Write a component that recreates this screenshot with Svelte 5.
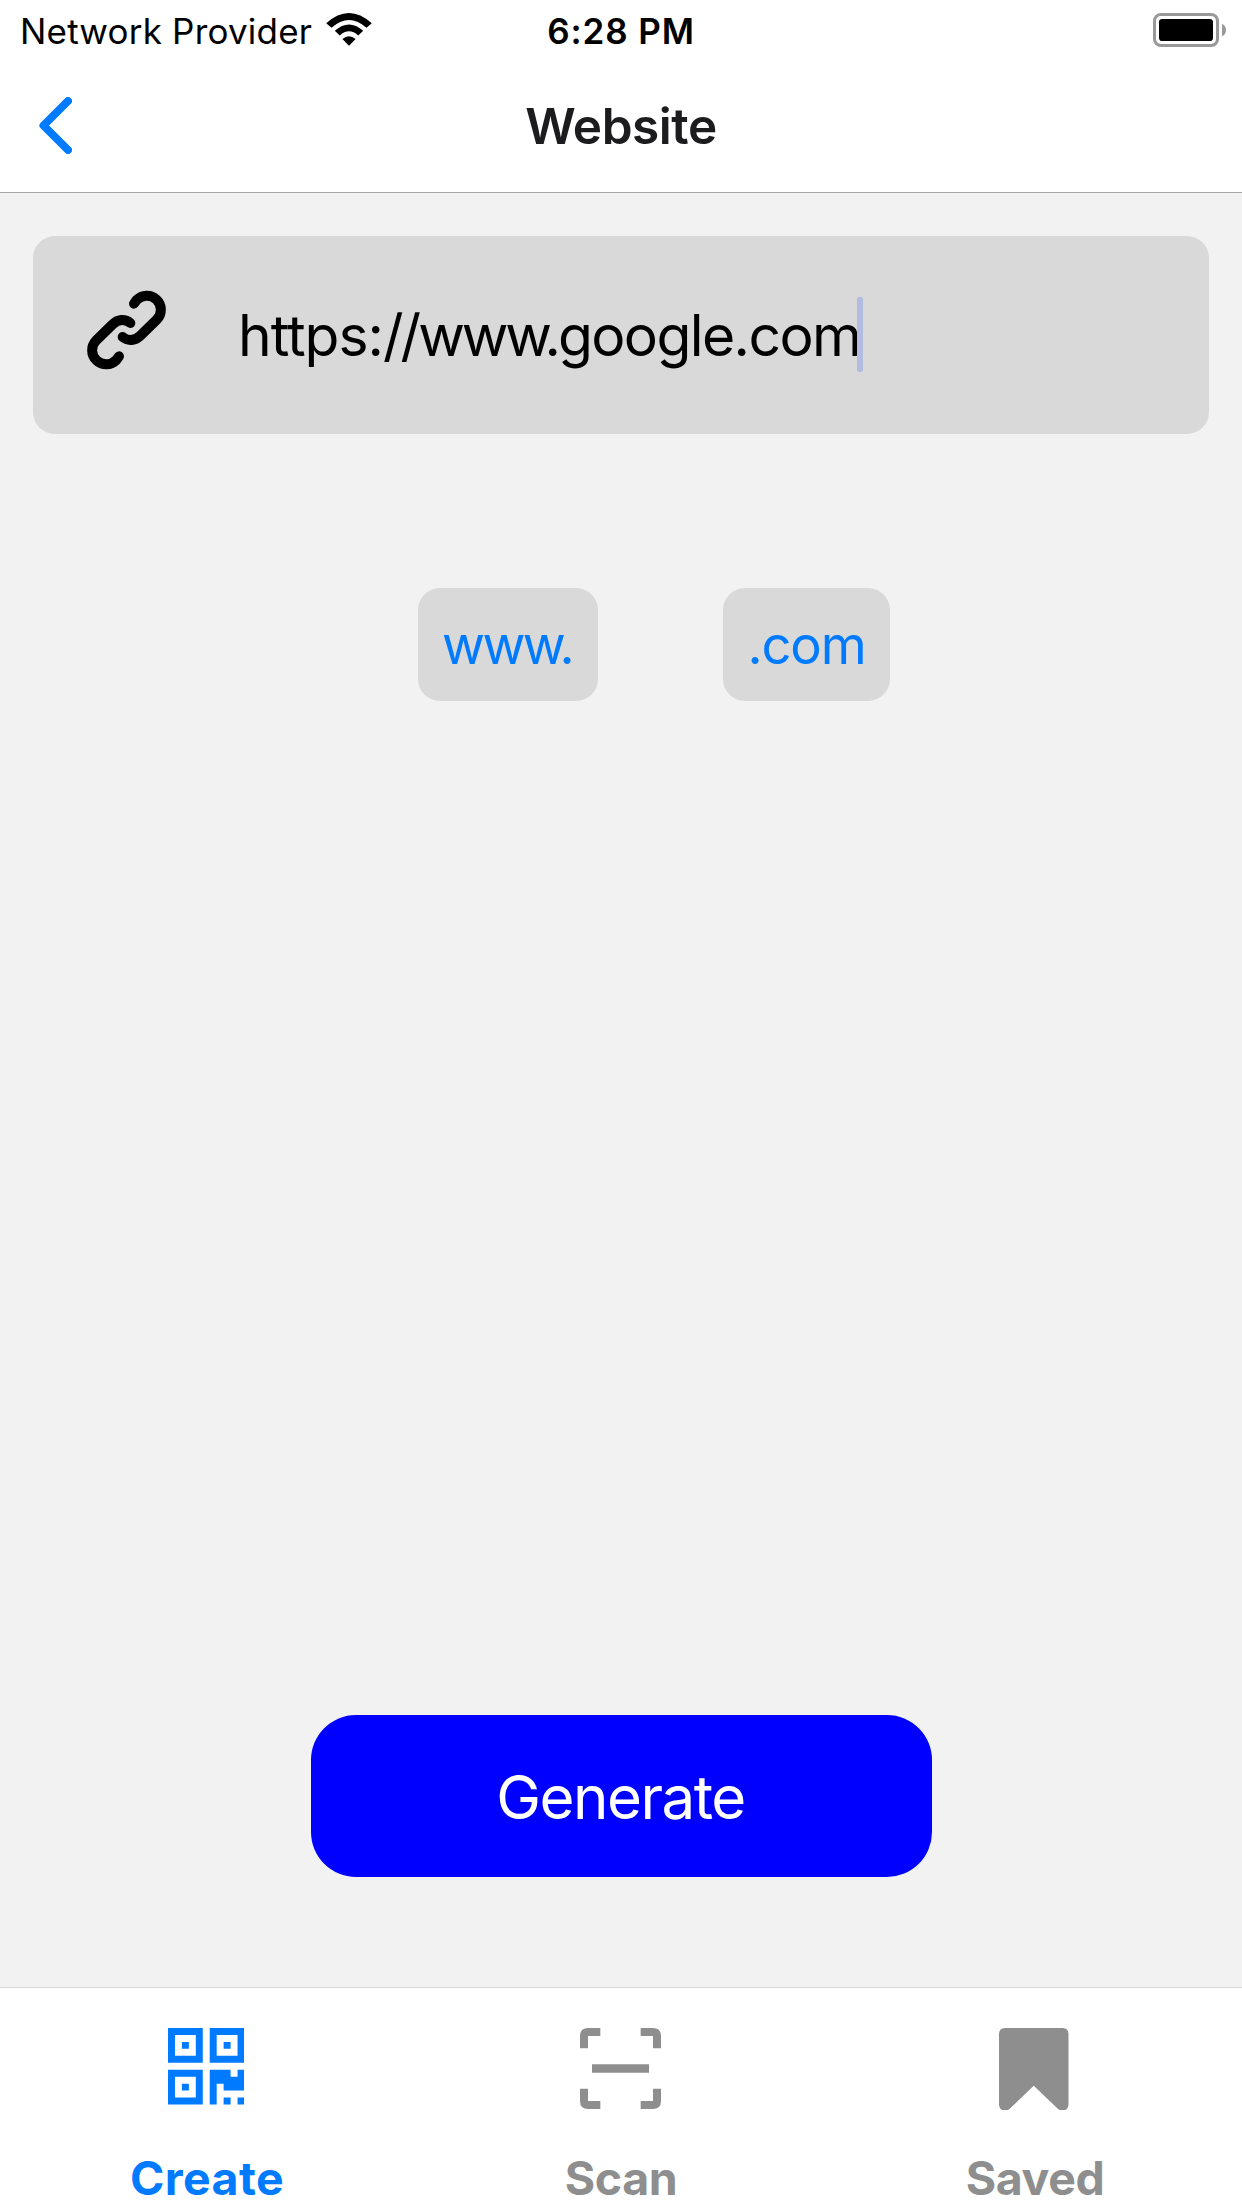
<script>
  // The address is kept in parts so that each one can carry its own tracking.
  const address = [
    { kind: 'scheme', text: 'https:' },
    { kind: 'slashes', text: '//' },
    { kind: 'prefix', text: 'www.' },
    { kind: 'domain', text: 'google.com' }
  ];
  let active = $state('create');
  const tabs = [
    { id: 'create', label: 'Create' },
    { id: 'scan', label: 'Scan' },
    { id: 'saved', label: 'Saved' }
  ];
</script>

<div class="screen">
  <header>
    <div class="status">
      <div class="carrier">
        <span class="network">Network Provider</span>
        <svg class="wifi" viewBox="0 0 138 100" aria-hidden="true">
          <path d="M0 31 Q69 -31 138 31 L122 45 Q69 -2 16 45Z" />
          <path d="M26 54 Q69 15 112 54 L97 68 Q69 43 41 68Z" />
          <path d="M49 79 Q69 62 89 79 L69 99Z" />
        </svg>
      </div>
      <span class="time">6:28 PM</span>
      <div class="power">
        <svg class="battery" viewBox="0 0 222 102" aria-hidden="true">
          <rect x="4.5" y="4.5" width="189" height="93" rx="19" fill="#fff" stroke="#999" stroke-width="9" />
          <rect x="18" y="18" width="162" height="66" rx="10" />
          <path d="M207 32Q219 38 219 51Q219 64 207 70Z" fill="#999" />
        </svg>
      </div>
    </div>
    <nav>
      <button class="back" aria-label="Back">
        <svg viewBox="0 0 33 57"><path d="M29 4L4.5 28.500L29 53" /></svg>
      </button>
      <h1>Website</h1>
    </nav>
  </header>

  <main>
    <div class="field">
      <svg class="link" viewBox="198 207 243 246" aria-hidden="true">
        <path d="M342 251L350 240A42 42 0 0 1 411 298L362 346C346 362 325 365 308 351" />
        <path d="M297 409L289 420A42 42 0 0 1 228 362L277 314C293 298 314 295 331 309" />
      </svg>
      <span class="url">{#each address as part (part.kind)}<span class={part.kind}>{part.text}</span>{/each}</span>
      <span class="caret"></span>
    </div>

    <div class="chips">
      <button class="chip www">www.</button>
      <button class="chip com">.com</button>
    </div>

    <button class="generate"><span>Generate</span></button>
  </main>

  <footer>
    {#each tabs as tab (tab.id)}
      <button class="tab {tab.id}" class:active={active === tab.id} onclick={() => (active = tab.id)}>
        <span class="icon">
          {#if tab.id === 'create'}
            <svg class="qr" viewBox="0 0 11 11">
              <path fill-rule="evenodd" d="M0 0h5v5h-5zM1 1v3h3v-3zM2 2h1v1h-1zM6 0h5v5h-5zM7 1v3h3v-3zM8 2h1v1h-1zM0 6h5v5h-5zM1 7v3h3v-3zM2 8h1v1h-1zM6 6h3v1h1v-1h1v3h-3v-1h-1v3h-1zM8 10h1v1h-1zM10 10h1v1h-1z" />
            </svg>
          {:else if tab.id === 'scan'}
            <svg class="frame" viewBox="0 0 243 243">
              <path d="M0 61V24Q0 0 24 0H61V24H24V61ZM182 0H219Q243 0 243 24V61H219V24H182ZM0 182H24V219H61V243H24Q0 243 0 219ZM219 182H243V219Q243 243 219 243H182V219H219ZM36 109H207V134H36Z" />
            </svg>
          {:else}
            <svg class="bookmark" viewBox="0 0 208 247">
              <path d="M18 0H190Q208 0 208 18V229C208 246 189 253 176 242L104 173L32 242C19 253 0 246 0 229V18Q0 0 18 0Z" />
            </svg>
          {/if}
        </span>
        <span class="label">{tab.label}</span>
      </button>
    {/each}
  </footer>
</div>

<style>
  :global(body) {
    background: #f2f2f2;
  }
  .screen {
    width: 1242px;
    height: 2208px;
    display: flex;
    flex-direction: column;
    font-family: Inter, 'Liberation Sans', sans-serif;
    color: #000;
    white-space: nowrap;
  }
  button {
    border: 0;
    padding: 0;
    margin: 0;
    background: none;
    font: inherit;
    color: inherit;
  }
  svg {
    display: block;
    flex: none;
  }
  header {
    box-sizing: border-box;
    height: 193px;
    background: #fff;
    border-bottom: 1px solid #a7a7a7;
  }
  .status {
    display: grid;
    grid-template-columns: 1fr auto 1fr;
    height: 60px;
    font-size: 35px;
    line-height: 63px;
  }
  .carrier {
    display: flex;
    padding-left: 20px;
  }
  .network {
    width: 306px;
    letter-spacing: 0.2px;
  }
  .wifi {
    width: 46px;
    height: 33px;
    margin-top: 13px;
  }
  .time {
    font-weight: 600;
    letter-spacing: 0.9px;
  }
  .power {
    display: flex;
    justify-content: flex-end;
    padding: 13px 15px 0 0;
  }
  .battery {
    width: 74px;
    height: 34px;
  }
  nav {
    display: grid;
    grid-template-columns: 1fr auto 1fr;
    align-items: center;
    height: 132px;
  }
  .back {
    justify-self: start;
    padding: 0 0 1px 39px;
  }
  .back svg {
    width: 33px;
    height: 57px;
    fill: none;
    stroke: #007aff;
    stroke-width: 8;
    stroke-linecap: round;
    stroke-linejoin: round;
  }
  h1 {
    margin: 0;
    font-size: 49.5px;
    font-weight: 600;
    letter-spacing: -0.45px;
    line-height: 132px;
    color: #1c1c1e;
  }
  main {
    flex: 1;
    display: flex;
    flex-direction: column;
    align-items: center;
    padding: 43px 33px 0;
  }
  .field {
    box-sizing: border-box;
    width: 1176px;
    height: 198px;
    display: flex;
    align-items: center;
    padding-left: 53px;
    background: #d9d9d9;
    border-radius: 22px;
  }
  .link {
    width: 81px;
    height: 82px;
    margin: 0 71px 10px 0;
    fill: none;
    stroke: #000;
    stroke-width: 30;
    stroke-linecap: round;
    stroke-linejoin: round;
  }
  .url {
    width: 619px;
    font-size: 57px;
    line-height: 197px;
  }
  .scheme {
    letter-spacing: -1px;
  }
  .slashes {
    letter-spacing: -3px;
  }
  .prefix {
    letter-spacing: -3.1px;
  }
  .domain {
    letter-spacing: -1.6px;
  }
  .caret {
    width: 6px;
    height: 75px;
    margin-bottom: 1px;
    border-radius: 2px;
    background: #b2bce0;
  }
  .chips {
    display: flex;
    gap: 125px;
    margin: 154px 0 0 66px;
  }
  .chip {
    height: 113px;
    border-radius: 22px;
    background: #d9d9d9;
    color: #007aff;
    font-size: 52.5px;
    line-height: 115px;
  }
  .www {
    width: 180px;
    padding-right: 2px;
    letter-spacing: -2.5px;
  }
  .com {
    width: 167px;
    letter-spacing: -1.1px;
  }
  .generate {
    width: 621px;
    height: 162px;
    margin-top: 1014px;
    padding: 2px 1px 0 0;
    border-radius: 45px;
    background: #00f;
    color: #fff;
    font-size: 60px;
    letter-spacing: -1.5px;
    line-height: 160px;
  }
  footer {
    display: grid;
    grid-template-columns: repeat(3, 1fr);
    height: 220px;
    border-top: 1px solid #d8d8d8;
    background: #fff;
    color: #8e8e8e;
  }
  .tab {
    display: flex;
    flex-direction: column;
    align-items: center;
    padding-top: 39px;
    fill: currentColor;
  }
  .active {
    color: #007aff;
  }
  .icon {
    height: 121px;
  }
  .qr {
    width: 76.5px;
    height: 76.5px;
    margin: 1px 2px 0 0;
  }
  .frame {
    width: 81px;
    height: 81px;
    margin: 1px 1px 0 0;
  }
  .bookmark {
    width: 69.5px;
    height: 82.5px;
    margin: 0.5px 2px 0 0;
  }
  .label {
    font-size: 46.5px;
    font-weight: 700;
    letter-spacing: -0.4px;
    line-height: 60px;
  }
  .create .label {
    letter-spacing: 0.4px;
  }
</style>
